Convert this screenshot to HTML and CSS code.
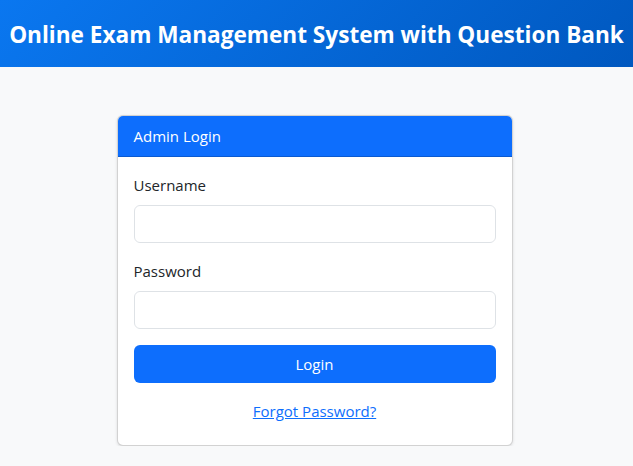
FILE: index.html
```html
<!DOCTYPE html>
<html lang="en">
<head>
<meta charset="utf-8">
<title>Admin Login</title>
<link rel="stylesheet" href="styles.css">
</head>
<body>
<header class="topbar">
  <h1 class="title">Online Exam Management System with Question Bank</h1>
</header>
<main class="page">
  <section class="card">
    <div class="card-header">Admin Login</div>
    <form class="card-body">
      <div class="field">
        <label class="label" for="u">Username</label>
        <input class="input" id="u" type="text">
      </div>
      <div class="field">
        <label class="label" for="p">Password</label>
        <input class="input" id="p" type="password">
      </div>
      <button class="btn" type="button">Login</button>
      <div class="forgot"><a href="#">Forgot Password?</a></div>
    </form>
  </section>
</main>
</body>
</html>
```
FILE: styles.css
```css
* { box-sizing: border-box; }
html, body { margin: 0; }
body {
  background: #f8f9fa;
  font-family: "Open Sans", "Noto Sans", sans-serif;
  color: #212529;
  font-size: 15px;
}
.topbar {
  height: 67px;
  background: linear-gradient(135deg, #0a77f0 0%, #0058bf 100%);
  display: flex;
  align-items: center;
  justify-content: center;
  padding-top: 2px;
}
.title {
  margin: 0;
  color: #fff;
  font-size: 22.6px;
  font-weight: 700;
  letter-spacing: 0;
  white-space: nowrap;
}
.page {
  display: flex;
  justify-content: center;
  padding-top: 48px;
  padding-right: 4px;
}
.card {
  width: 396px;
  background: #fff;
  border: 1px solid rgba(0,0,0,0.175);
  border-radius: 6px;
  box-shadow: 0 1px 3px rgba(0,0,0,0.12);
  overflow: hidden;
}
.card-header {
  background: #0d6efd;
  color: #fff;
  padding: 8px 16px;
  line-height: 24px;
  border-bottom: 1px solid rgba(0,0,0,0.175);
}
.card-body {
  padding: 16px 16px 22px;
  margin: 0;
}
.field { margin-bottom: 16px; }
.label {
  display: block;
  line-height: 24px;
  margin-bottom: 8px;
}
.input {
  display: block;
  width: 100%;
  height: 38px;
  border: 1px solid #dee2e6;
  border-radius: 6px;
  background: #fff;
  font: inherit;
  padding: 6px 12px;
}
.btn {
  display: block;
  width: 100%;
  height: 38px;
  border: 0;
  border-radius: 6px;
  background: #0d6efd;
  color: #fff;
  font: inherit;
  line-height: 24px;
}
.forgot {
  margin-top: 16px;
  text-align: center;
  line-height: 24px;
}
.forgot a { color: #0d6efd; text-decoration: underline; }
```
